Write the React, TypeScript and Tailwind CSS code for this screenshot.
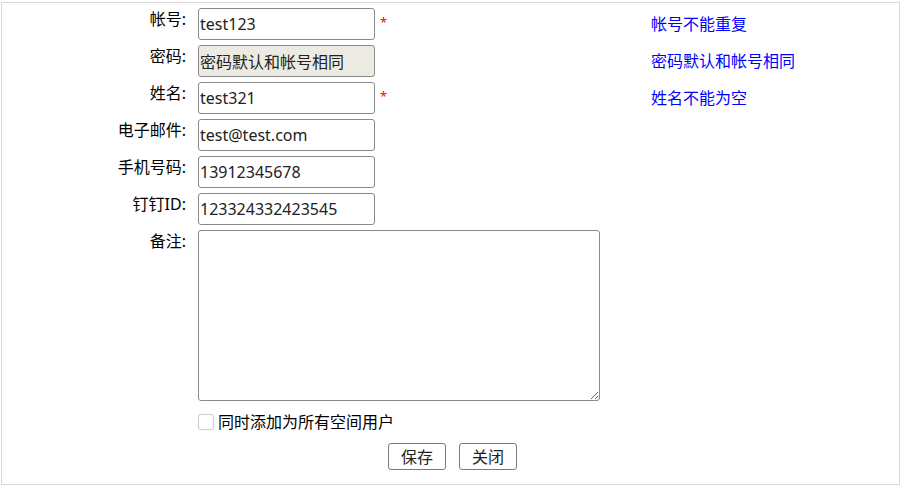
import React from "react";

const font = { fontFamily: '"Noto Sans","Noto Sans CJK SC",sans-serif' };

function Row({
  label,
  value,
  disabled,
  star,
  hint,
}: {
  label: string;
  value: string;
  disabled?: boolean;
  star?: boolean;
  hint?: string;
}) {
  return (
    <div className="flex h-[32px] mb-[5px]">
      <div className="w-[184px] text-right text-[16px] leading-[22px] text-black shrink-0">{label}</div>
      <div className="ml-[12px] w-[454px] shrink-0 flex items-start">
        <input
          readOnly
          value={value}
          disabled={disabled}
          className={
            "w-[177px] h-[32px] border border-[#8a8a8a] rounded-[3px] pl-[1px] pr-[2px] text-[16px] text-[#222] outline-none " +
            (disabled ? "bg-[#ebebe4]" : "bg-white")
          }
          style={font}
        />
        {star && <span className="ml-[5px] pt-[3px] text-[13px] leading-[22px] text-[#ff0000]">*</span>}
      </div>
      {hint && (
        <div className="self-center -ml-[1px] text-[16px] leading-[22px] text-[#0000ff] whitespace-nowrap">{hint}</div>
      )}
    </div>
  );
}

export default function App() {
  return (
    <div className="w-[905px] h-[489px] bg-white" style={font}>
      <div className="ml-[1px] mt-[2px] w-[899px] h-[483px] border border-[#d9d9d9] pt-[5px]">
        <Row label="帐号:" value="test123" star hint="帐号不能重复" />
        <Row label="密码:" value="密码默认和帐号相同" disabled hint="密码默认和帐号相同" />
        <Row label="姓名:" value="test321" star hint="姓名不能为空" />
        <Row label="电子邮件:" value="test@test.com" />
        <Row label="手机号码:" value="13912345678" />
        <Row label="钉钉ID:" value="123324332423545" />
        <div className="flex mt-[2px]">
          <div className="w-[184px] text-right text-[16px] leading-[22px] text-black shrink-0">备注:</div>
          <textarea
            className="ml-[12px] w-[402px] h-[171px] border border-[#8a8a8a] rounded-[3px] bg-white outline-none"
            style={font}
          />
        </div>
        <div className="flex items-center h-[20px] mt-[11px] pl-[196px]">
          <input
            type="checkbox"
            className="appearance-none w-[16px] h-[16px] border border-[#cfcfcf] rounded-[3px] bg-white shadow-[0_0_1px_rgba(0,0,0,0.15)]"
          />
          <span className="ml-[4px] text-[16px] leading-[20px] text-black">同时添加为所有空间用户</span>
        </div>
        <div className="flex justify-center gap-[13px] mt-[11px] pl-[4px]">
          <button className="w-[58px] h-[27px] border border-[#7a7a7a] rounded-[3px] bg-white text-[16px] leading-[20px] text-[#222]">
            保存
          </button>
          <button className="w-[58px] h-[27px] border border-[#7a7a7a] rounded-[3px] bg-white text-[16px] leading-[20px] text-[#222]">
            关闭
          </button>
        </div>
      </div>
    </div>
  );
}
